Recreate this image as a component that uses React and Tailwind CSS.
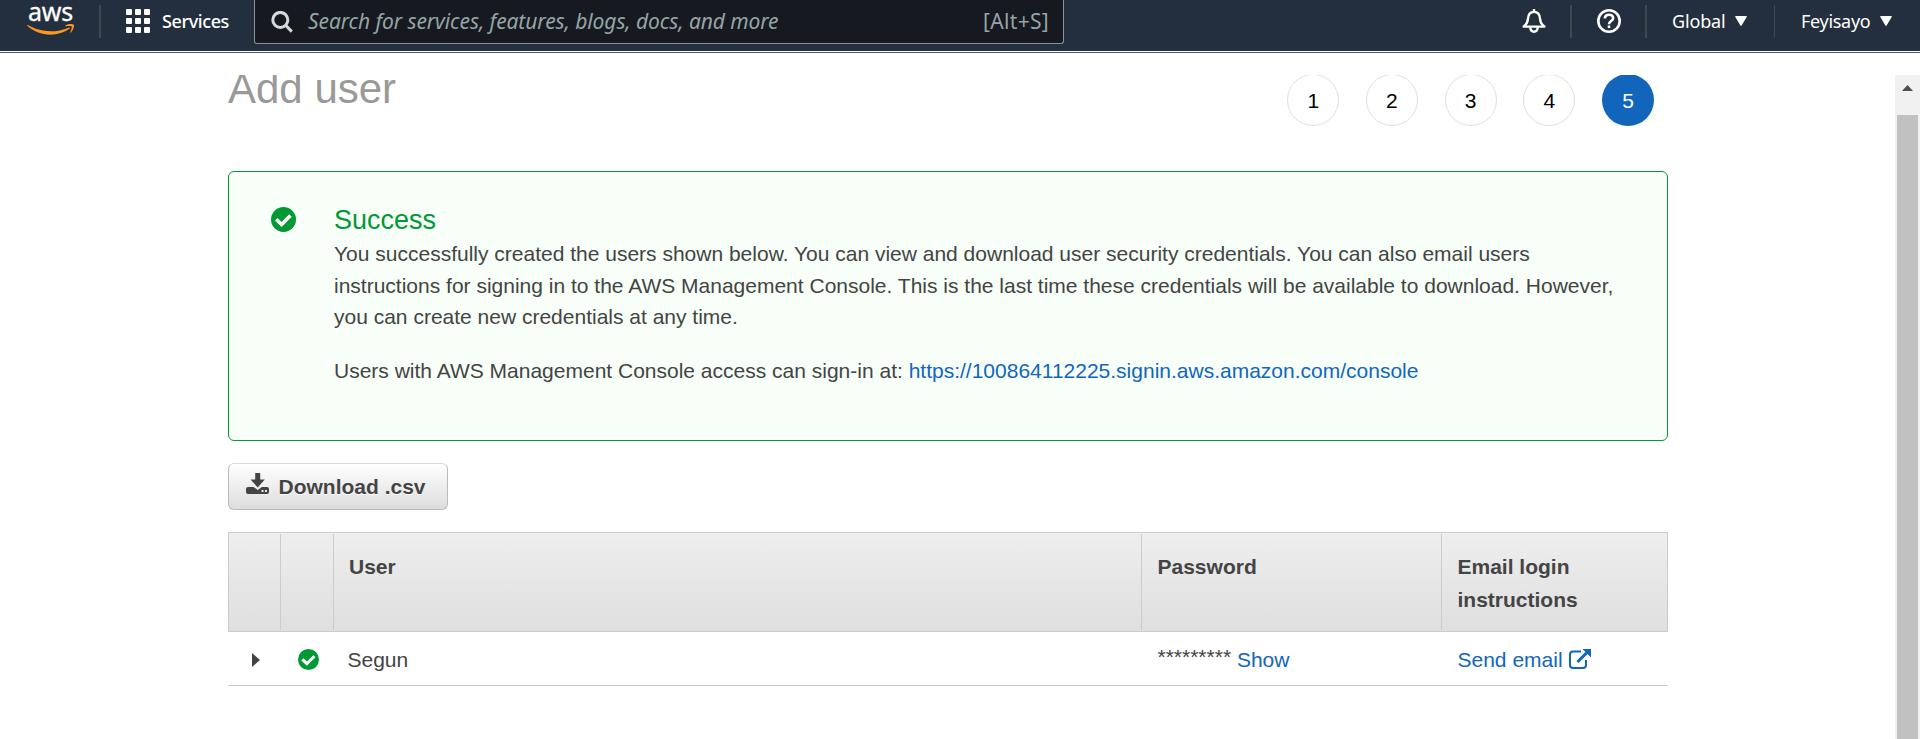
const STEPS = [1, 2, 3, 4];

function Caret() {
  return (
    <svg width="12" height="10" viewBox="0 0 12 10" className="block fill-white">
      <path d="M0.8 0h10.4q1 0 .5.9L6.6 9.5q-.6.8-1.2 0L.3.9Q-.2 0 .8 0z" />
    </svg>
  );
}

function CheckCircle({ size }) {
  return (
    <svg width={size} height={size} viewBox="0 0 25 25" className="block shrink-0">
      <circle cx="12.5" cy="12.5" r="12.5" fill="#009933" />
      <path d="M5.2 12.300l5.400 5.200 8.900-8.900" fill="none" stroke="#fff" strokeWidth="3.600" />
    </svg>
  );
}

function Header() {
  return (
    <header className="flex h-[51px] bg-[#232f3e] font-['Noto_Sans',sans-serif] text-white">
      <div className="ml-[27px] w-[47px] shrink-0">
        <div className="-mt-px h-[25px] text-center text-[25px] leading-[25px] tracking-[-0.3px] [-webkit-text-stroke:0.3px_white]">aws</div>
        <svg width="47" height="11" viewBox="0 13.8 24 5.5" className="block fill-[#f8991d]">
          <path d="M21.698 16.207c-2.626 1.94-6.442 2.969-9.722 2.969-4.598 0-8.74-1.7-11.87-4.526-.247-.223-.024-.527.272-.351 3.384 1.963 7.559 3.153 11.877 3.153 2.914 0 6.114-.607 9.06-1.852.439-.2.814.287.383.607zM22.792 14.961c-.336-.43-2.22-.207-3.074-.103-.255.032-.295-.192-.063-.36 1.5-1.053 3.967-.75 4.254-.399.287.36-.08 2.826-1.485 4.007-.215.184-.423.088-.327-.151.32-.79 1.03-2.57.695-2.994z" />
        </svg>
      </div>
      <div className="mt-[5px] ml-[25px] h-[33px] w-[2px] shrink-0 bg-[#414750]" />
      <div className="mt-[9px] ml-[25px] grid h-6 w-6 shrink-0 grid-cols-3 gap-[3px]">
        {Array.from({ length: 9 }, (_, i) => (
          <span key={i} className="rounded-[1px] bg-white" />
        ))}
      </div>
      <div className="mt-[8px] ml-[12px] w-[67px] shrink-0 text-[18px] leading-[26px] font-medium whitespace-nowrap tracking-[-0.4px]">Services</div>
      <div className="ml-[25px] flex h-[44px] w-[810px] shrink-0 rounded-b-[3px] border border-t-0 border-[#8a9197] bg-[#16191f] text-[#95a5a6]">
        <svg width="22" height="22" viewBox="0 0 22 22" className="mt-[11px] ml-[16px] block shrink-0 fill-none stroke-[#d5dbdb] stroke-[3]">
          <circle cx="9.3" cy="8.9" r="7.5" />
          <path d="M14.6 14.2l6.2 6.4" />
        </svg>
        <div className="mt-[8px] ml-[15px] w-[500px] shrink-0 text-[21px] leading-[26px] whitespace-nowrap italic tracking-[-0.090px]">
          Search for services, features, blogs, docs, and more
        </div>
        <div className="mt-[8px] mr-[14px] ml-auto text-[21px] leading-[26px] tracking-[0.300px]">[Alt+S]</div>
      </div>
      <div className="ml-auto flex shrink-0">
        <svg width="24" height="24" viewBox="0 0 24 24" className="mt-[9px] block fill-none stroke-white stroke-[2.4]" strokeLinejoin="round">
          <path d="M1.6 17.6C4.4 15.6 5.6 13.6 5.9 10.2 6.2 5.4 8.4 2.9 12 2.9s5.800 2.500 6.100 7.300c.3 3.400 1.500 5.400 4.300 7.400z" />
          <path d="M12 3V0M8.200 18.200c.3 3 1.600 4.600 3.800 4.600s3.500-1.600 3.800-4.600" />
        </svg>
        <div className="mt-[5px] ml-[24px] h-[33px] w-[2px] bg-[#414750]" />
        <svg width="24" height="24" viewBox="0 0 24 24" className="mt-[9px] ml-[25px] block fill-none stroke-white stroke-[2.6]">
          <circle cx="12" cy="12" r="10.700" />
          <path d="M7.900 9.600C7.900 7 9.600 5.800 12 5.800s4.100 1.300 4.100 3.500c0 2.700-4.100 2.900-4.100 5.900" />
          <path d="M12 16.500v2.600" />
        </svg>
        <div className="mt-[5px] ml-[24px] h-[33px] w-[2px] bg-[#414750]" />
        <div className="mt-[8px] ml-[25px] flex w-[75px] items-center justify-between self-start text-[18px] leading-[26px] tracking-[-0.150px]">
          Global
          <Caret />
        </div>
        <div className="mt-[5px] ml-[27px] h-[33px] w-px bg-[#414750]" />
        <div className="mt-[8px] mr-[28px] ml-[26px] flex w-[91px] items-center justify-between self-start text-[18px] leading-[26px] tracking-[-0.3px]">
          Feyisayo
          <Caret />
        </div>
      </div>
    </header>
  );
}

function Wizard() {
  return (
    <div className="flex h-[96px] justify-between">
      <h1 className="-mt-[10px] text-[42px] leading-[48px] text-[#999]">Add user</h1>
      <div className="-mt-px mr-[14px] flex gap-[26.700px] text-[21px] leading-[52px]">
        {STEPS.map((n) => (
          <div key={n} className="h-[52px] w-[52px] rounded-full border border-[#e0e0e0] text-center text-black">
            {n}
          </div>
        ))}
        <div className="h-[52px] w-[52px] rounded-full bg-[#1166bb] pt-px text-center text-white">5</div>
      </div>
    </div>
  );
}

function Success() {
  return (
    <section className="flex h-[270px] rounded-[6px] border border-[#009933] bg-[#f7fff8] pt-[35px] pl-[42px]">
      <CheckCircle size={25} />
      <div className="ml-[38px] text-[21px] leading-[31.500px] whitespace-nowrap text-[#444]">
        <h2 className="h-[31px] text-[27px] leading-[27px] text-[#009933]">Success</h2>
        <p>
          You successfully created the users shown below. You can view and download user security credentials. You can also email users
          <br />
          instructions for signing in to the AWS Management Console. This is the last time these credentials will be available to download. However,
          <br />
          you can create new credentials at any time.
        </p>
        <p className="mt-[22px]">
          Users with AWS Management Console access can sign-in at:{" "}
          <a className="text-[#1166bb]">https://100864112225.signin.aws.amazon.com/console</a>
        </p>
      </div>
    </section>
  );
}

function UserTable() {
  return (
    <div className="mt-[22px] text-[21px] text-[#444]">
      <div className="flex h-[100px] border border-[#ccc] bg-linear-to-b from-[#eee] to-[#dfdfdf] py-px leading-[33px] font-bold">
        <div className="w-[52px] border-r border-[#ccc]" />
        <div className="w-[53px] border-r border-[#ccc]" />
        <div className="w-[808px] border-r border-[#ccc] pt-[16px] pl-[15px]">User</div>
        <div className="w-[300px] border-r border-[#ccc] pt-[16px] pl-[15.500px]">Password</div>
        <div className="pt-[16px] pl-[15.500px]">
          Email login
          <br />
          instructions
        </div>
      </div>
      <div className="flex h-[54px] items-center border-b border-[#ccc] pt-[2px]">
        <div className="w-[70px] pl-[24px]">
          <svg width="8" height="14" viewBox="0 0 8 14" className="block fill-[#444]">
            <path d="M0 0l8 7-8 7z" />
          </svg>
        </div>
        <CheckCircle size={21} />
        <div className="ml-[28.500px] w-[810px]">Segun</div>
        <div className="w-[300px]">
          <span className="relative -top-[3px]">*********</span> <a className="text-[#1166bb]">Show</a>
        </div>
        <a className="flex items-center gap-[6px] text-[#1166bb]">
          Send email
          <svg width="22" height="20" viewBox="0 0 22 20" className="-mt-[2px] block">
            <path d="M12 2.500H4Q1 2.500 1 5.500V16Q1 19 4 19H14Q17 19 17 16V11" fill="none" stroke="#1166bb" strokeWidth="2" />
            <path d="M8.500 13L18 3.500" stroke="#1166bb" strokeWidth="3" />
            <path d="M13.500 0H22V8.500z" fill="#1166bb" />
          </svg>
        </a>
      </div>
    </div>
  );
}

export default function App() {
  return (
    <div className="h-[739px] w-[1920px] overflow-hidden bg-white font-['Liberation_Sans',Arial,sans-serif]">
      <Header />
      <div className="mt-px h-px bg-[#4b5564]" />
      <div className="mt-[22px] flex h-[664px] overflow-hidden">
        <main className="ml-[228px] w-[1440px]">
          <Wizard />
          <Success />
          <button className="mt-[22px] flex h-[47px] w-[220px] rounded-[6px] border border-[#bbb] border-t-[#d9d9d9] bg-linear-to-b from-white to-[#ddd] pl-[17px] text-[21px] font-bold text-[#444] [text-shadow:0_1px_0_#fff]">
            <svg width="23" height="21" viewBox="0 0 23 21" className="mt-[9px] block shrink-0 fill-[#444]">
              <path d="M9.200 0h5v6.500h4.600L11.700 14.500 4.600 6.500h4.600z" />
              <path fillRule="evenodd" d="M2 14h5.500l4.200 3 4.200-3H21q2 0 2 2v3q0 2-2 2H2q-2 0-2-2v-3q0-2 2-2zM15.500 17v2h2v-2zM19 17v2h2v-2z" />
            </svg>
            <span className="mt-[10px] ml-[9.500px] leading-[26px] whitespace-nowrap">Download .csv</span>
          </button>
          <UserTable />
        </main>
        <div className="ml-auto w-[25px] bg-[#f1f1f1] px-[2px] pt-[10px]">
          <svg width="11" height="6" viewBox="0 0 11 6" className="ml-[5px] block fill-[#505050]">
            <path d="M5.500 0L11 6H0z" />
          </svg>
          <div className="mt-[24px] h-[640px] w-[21px] bg-[#c1c1c1]" />
        </div>
      </div>
    </div>
  );
}
